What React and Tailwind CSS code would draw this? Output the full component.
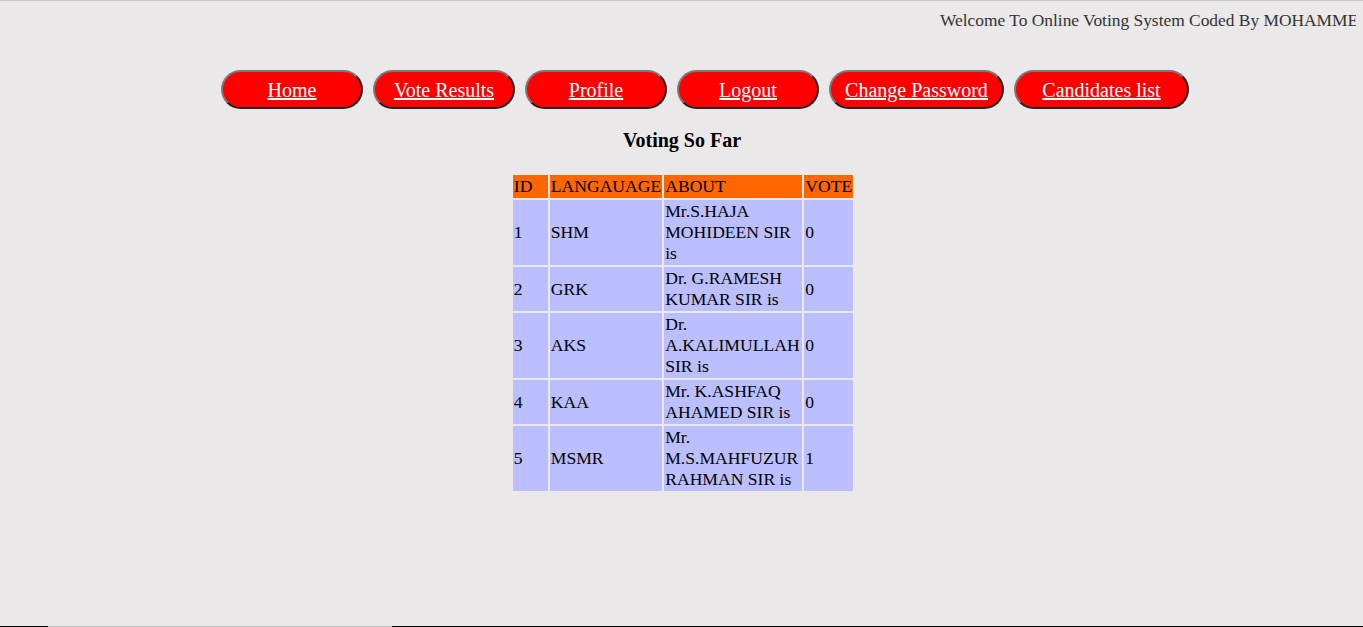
import React from 'react';

const links = [
  { label: 'Home', w: 'w-[142px]' },
  { label: 'Vote Results', w: 'w-[142px]' },
  { label: 'Profile', w: 'w-[142px]' },
  { label: 'Logout', w: 'w-[142px]' },
  { label: 'Change Password', w: 'w-[175px]' },
  { label: 'Candidates list', w: 'w-[175px]' },
];

const rows = [
  { id: 1, lang: 'SHM', about: 'Mr.S.HAJA MOHIDEEN SIR is', vote: 0 },
  { id: 2, lang: 'GRK', about: 'Dr. G.RAMESH KUMAR SIR is', vote: 0 },
  { id: 3, lang: 'AKS', about: 'Dr. A.KALIMULLAH SIR is', vote: 0 },
  { id: 4, lang: 'KAA', about: 'Mr. K.ASHFAQ AHAMED SIR is', vote: 0 },
  { id: 5, lang: 'MSMR', about: 'Mr. M.S.MAHFUZUR RAHMAN SIR is', vote: 1 },
];

export default function App() {
  return (
    <div
      className="h-[627px] bg-[#eae8e8] flex flex-col border-t border-[#c8c8c8] overflow-hidden"
      style={{ fontFamily: '"Liberation Serif", "Times New Roman", serif' }}
    >
      {/* Marquee line */}
      <div className="w-[1356px] overflow-hidden whitespace-nowrap pl-[940px] pt-[9px] text-[17.4px] leading-[20px] text-[#333]">
        Welcome To Online Voting System Coded By MOHAMMED MAHFUZUR RAHMAN
      </div>

      {/* Nav buttons */}
      <div className="flex gap-[10px] pl-[221px] mt-[40px]">
        {links.map((l) => (
          <a
            key={l.label}
            href="#"
            className={`${l.w} h-[39px] flex items-center justify-center rounded-full bg-[#ff0000] border-2 border-t-[#7a7a7a] border-l-[#7a7a7a] border-b-[#262626] border-r-[#262626] text-white underline text-[20px] leading-[22px]`}
          >
            {l.label}
          </a>
        ))}
      </div>

      {/* Title */}
      <h3 className="text-center font-bold text-[20px] leading-[24px] mt-[19px] pl-[1px] text-black">
        Voting So Far
      </h3>

      {/* Results table */}
      <div className="flex justify-center mt-[21px] pl-[3px]">
        <table className="border-separate border-spacing-[2px] text-[17.6px] leading-[21px] text-black">
          <thead>
            <tr className="bg-[#ff6600] text-left">
              <th className="w-[35px] px-[1px] py-[1px] font-normal">ID</th>
              <th className="w-[112px] px-[1px] py-[1px] font-normal">LANGAUAGE</th>
              <th className="w-[138px] px-[1px] py-[1px] font-normal">ABOUT</th>
              <th className="w-[49px] px-[1px] py-[1px] font-normal">VOTE</th>
            </tr>
          </thead>
          <tbody>
            {rows.map((r) => (
              <tr key={r.id} className="bg-[#bbbfff]">
                <td className="px-[1px] py-[1px] align-middle">{r.id}</td>
                <td className="px-[1px] py-[1px] align-middle">{r.lang}</td>
                <td className="px-[1px] py-[1px] align-middle">{r.about}</td>
                <td className="px-[1px] py-[1px] align-middle">{r.vote}</td>
              </tr>
            ))}
          </tbody>
        </table>
      </div>

      <div className="flex-1" />

      {/* Bottom edge */}
      <div className="flex h-[1px]">
        <div className="w-[48px] bg-black" />
        <div className="w-[344px] bg-[#bdbdbd]" />
        <div className="flex-1 bg-black" />
      </div>
    </div>
  );
}
